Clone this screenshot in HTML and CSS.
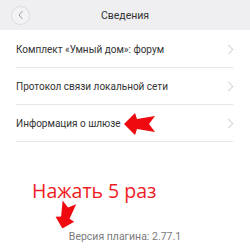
FILE: index.html
```html
<!DOCTYPE html>
<html lang="ru">
<head>
    <meta charset="UTF-8">
    <meta name="viewport" content="width=device-width, initial-scale=1.0">
    <title>Сведения</title>
    <link rel="stylesheet" href="styles.css">
</head>
<body>
    <header class="topbar">
        <button class="back" type="button">
            <svg width="8" height="10" viewBox="0 0 8 10"><path d="M5.5 1 L2 5 L5.5 9" fill="none" stroke="#9a9a9a" stroke-width="1"/></svg>
        </button>
        <h1 class="title">Сведения</h1>
    </header>

    <ul class="menu">
        <li class="item">Комплект «Умный дом»: форум<span class="chev"></span></li>
        <li class="item">Протокол связи локальной сети<span class="chev"></span></li>
        <li class="item">Информация о шлюзе<span class="chev"></span></li>
    </ul>

    <p class="version">Версия плагина: 2.77.1</p>

    <!-- пометки поверх скриншота -->
    <svg class="mark mark-left" width="32" height="22" viewBox="0 0 32 22">
        <polygon points="0,11 11,0 13,6 31,3 25,11 31,19 13,16 11,22" fill="#ee0a0e"/>
    </svg>
    <div class="hint">Нажать 5 раз</div>
    <svg class="mark mark-down" width="28" height="20" viewBox="0 0 32 22">
        <polygon points="0,11 11,0 13,6 31,3 25,11 31,19 13,16 11,22" fill="#ee0a0e"/>
    </svg>
</body>
</html>
```

FILE: styles.css
```css
body {
    margin: 0;
    width: 250px;
    height: 250px;
    background: #ffffff;
    font-family: Roboto, 'Noto Sans', sans-serif;
    color: #333333;
    position: relative;
    overflow: hidden;
}
.topbar {
    height: 30px;
    background: #efeff1;
    display: flex;
    align-items: center;
    position: relative;
}
.back {
    width: 19px;
    height: 19px;
    margin-left: 11px;
    padding: 0;
    border: 1px solid #dcdcdc;
    border-radius: 50%;
    background: #f3f3f5;
    display: flex;
    align-items: center;
    justify-content: center;
}
.title {
    position: absolute;
    left: 0;
    right: 0;
    margin: 0;
    text-align: center;
    font-size: 10.5px;
    font-weight: normal;
    color: #333333;
    pointer-events: none;
}
.menu {
    list-style: none;
    margin: 1px 0 0;
    padding: 0;
}
.item {
    height: 36px;
    margin: 0 17px 0 16px;
    border-bottom: 1px solid #e6e6e6;
    display: flex;
    align-items: center;
    justify-content: space-between;
    font-size: 10px;
}
.chev {
    width: 6px;
    height: 6px;
    margin-right: 1px;
    border-top: 1px solid #d4d4d4;
    border-right: 1px solid #d4d4d4;
    transform: rotate(45deg);
}
.version {
    margin: 88px 0 0;
    text-align: center;
    font-size: 10.5px;
    line-height: 14px;
    color: #7a7a7a;
}
.hint {
    position: absolute;
    left: 32px;
    top: 177px;
    font-family: 'Open Sans', 'Noto Sans', sans-serif;
    font-size: 19.5px;
    line-height: 28px;
    color: #ee1c24;
}
.mark {
    position: absolute;
}
.mark-left {
    left: 124px;
    top: 113px;
}
.mark-down {
    left: 52px;
    top: 205px;
    transform: rotate(-75deg);
}
```
